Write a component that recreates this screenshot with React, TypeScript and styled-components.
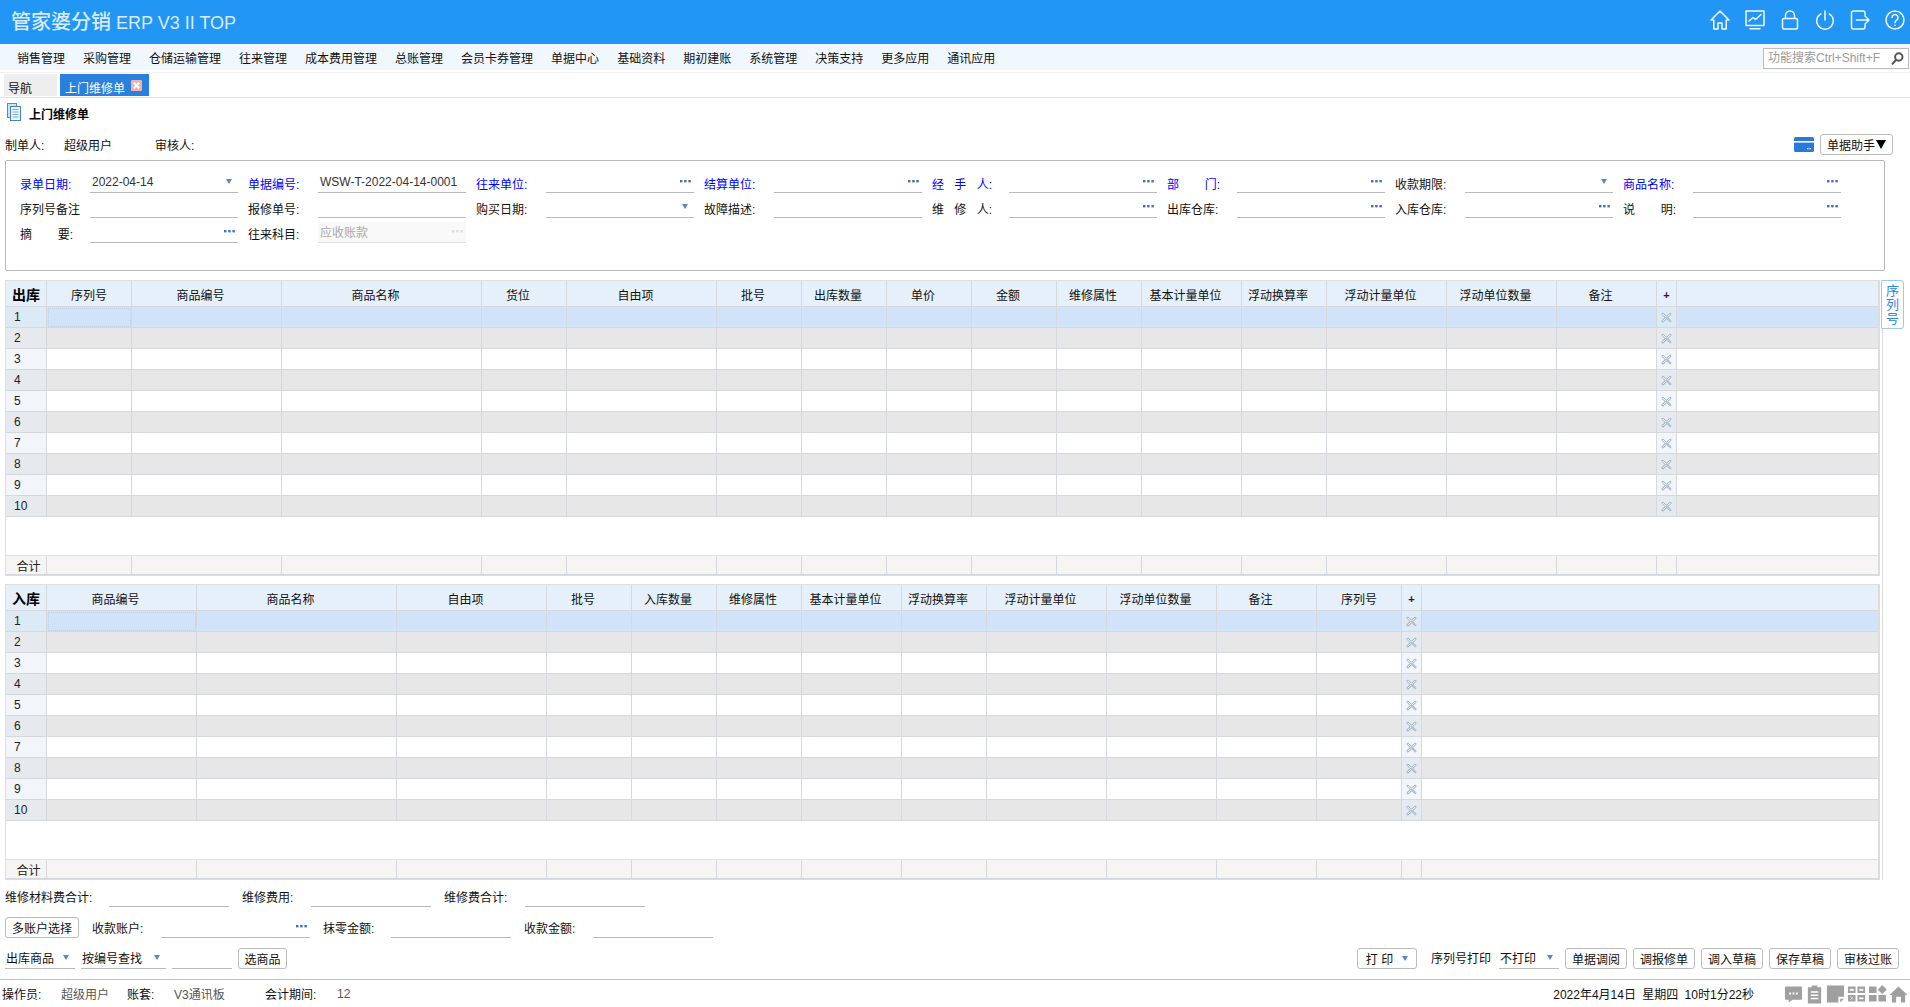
import React from "react";
import styled, { createGlobalStyle } from "styled-components";

const GlobalStyle = createGlobalStyle`
  html, body {
    margin: 0;
    padding: 0;
    background: #fff;
  }
  body {
    font-family: "Liberation Sans", "Noto Sans CJK SC", sans-serif;
    font-size: 12px;
    color: #111;
  }
`;

const Page = styled.div`
  width: 1910px;
  height: 1007px;
  overflow: hidden;
  display: flex;
  flex-direction: column;
`;

/* top bar */
const TopBar = styled.header`
  height: 44px;
  flex: none;
  background: #2196f5;
  display: flex;
  align-items: center;
  justify-content: space-between;
  padding: 0 5px 4px 11px;
  box-sizing: border-box;
`;

const Brand = styled.div`
  color: #dcebf9;
  font-size: 18px;
  white-space: nowrap;
  span {
    font-size: 20px;
    font-weight: 500;
  }
`;

const TopIcons = styled.div`
  display: flex;
  gap: 15px;
  align-items: center;
  svg {
    width: 20px;
    height: 20px;
    fill: none;
    stroke: #fff;
    stroke-width: 1.5;
    stroke-linejoin: round;
    stroke-linecap: round;
    opacity: 0.95;
  }
`;

const MenuBar = styled.nav`
  height: 26px;
  flex: none;
  background: #f1f7fe;
  display: flex;
  align-items: center;
  gap: 18px;
  padding: 0 1px 0 17px;
  box-sizing: border-box;
`;

const MenuItem = styled.span`
  color: #111;
  white-space: nowrap;
  padding-top: 1px;
`;

const SearchBox = styled.div`
  margin-left: auto;
  width: 146px;
  height: 21px;
  margin-top: 2px;
  box-sizing: border-box;
  border: 1px solid #bdbdbd;
  background: #fff;
  color: #9a9a9a;
  display: flex;
  align-items: center;
  justify-content: space-between;
  padding: 0 4px 3px 4px;
  white-space: nowrap;
  svg {
    width: 13px;
    height: 13px;
    flex: none;
    margin-top: 3px;
  }
`;

const TabStrip = styled.div`
  margin-top: 2px;
  height: 26px;
  flex: none;
  box-sizing: border-box;
  border-top: 1px solid #f1f1f1;
  border-bottom: 1px solid #dedede;
  display: flex;
  align-items: flex-end;
  gap: 3px;
  padding: 0 0 1px 4px;
`;

const NavTab = styled.div`
  width: 53px;
  height: 22px;
  box-sizing: border-box;
  background: #eeeeee;
  padding: 7px 0 0 4px;
  line-height: 16px;
`;

const ActiveTab = styled.div`
  width: 89px;
  height: 22px;
  box-sizing: border-box;
  background: #2a80de;
  color: #fff;
  padding: 7px 0 0 5px;
  line-height: 16px;
  display: flex;
  gap: 6px;
  svg {
    width: 11px;
    height: 11px;
    margin-top: -1px;
  }
`;

/* bill title */
const TitleRow = styled.div`
  height: 36px;
  flex: none;
  box-sizing: border-box;
  display: flex;
  align-items: flex-start;
  gap: 8px;
  padding: 5px 0 0 7px;
  svg {
    width: 14px;
    height: 18px;
  }
`;

const BillTitle = styled.h1`
  margin: 4px 0 0;
  font-size: 12px;
  line-height: 16px;
  font-weight: 700;
  color: #000;
`;

const MetaRow = styled.div`
  height: 21px;
  flex: none;
  margin-bottom: 5px;
  display: flex;
  align-items: center;
  padding: 0 17px 0 5px;
`;

const MetaLabel = styled.span<{ $w: number }>`
  width: ${p => p.$w}px;
  flex: none;
  white-space: nowrap;
`;

const CardIcon = styled.svg`
  margin-left: auto;
  width: 20px;
  height: 15px;
  margin-right: 6px;
`;

const Btn = styled.button<{ $w?: number }>`
  width: ${p => (p.$w ? `${p.$w}px` : "auto")};
  height: 21px;
  flex: none;
  padding: 0;
  box-sizing: border-box;
  border: 1px solid #bcbcbc;
  border-radius: 3px;
  background: #fff;
  color: #111;
  font: inherit;
  white-space: nowrap;
  display: flex;
  align-items: center;
  justify-content: center;
  gap: 6px;
`;

const BtnCaret = styled.i`
  flex: none;
  width: 0;
  height: 0;
  margin-left: -5px;
  border-left: 5px solid transparent;
  border-right: 5px solid transparent;
  border-top: 9px solid #000;
`;

/* head form */
const FormBox = styled.section`
  width: 1880px;
  height: 111px;
  flex: none;
  margin: 0 0 9px 5px;
  box-sizing: border-box;
  border: 1px solid #b9b9b9;
  border-radius: 2px;
  padding: 7px 0 0 14px;
  display: grid;
  grid-template-columns: 218px 218px 218px 218px 225px 218px 218px 218px;
  grid-auto-rows: 25px;
  column-gap: 10px;
`;

const Field = styled.div`
  display: flex;
  align-items: flex-end;
`;

const FieldLabel = styled.label<{ $wide?: boolean; $required?: boolean }>`
  width: ${p => (p.$wide ? 77 : 70)}px;
  flex: none;
  line-height: 16px;
  color: ${p => (p.$required ? "#0000ff" : "#111")};
  white-space: nowrap;
`;

const LabelInner = styled.span<{ $wide?: boolean }>`
  display: flex;
  width: ${p => (p.$wide ? 60 : 53)}px;
  justify-content: space-between;
`;

const FieldInput = styled.div<{ $disabled?: boolean }>`
  flex: 1;
  height: 21px;
  box-sizing: border-box;
  border-bottom: 1px solid ${p => (p.$disabled ? "#dedede" : "#b9b9b9")};
  background: ${p => (p.$disabled ? "#f9f9f9" : "transparent")};
  color: ${p => (p.$disabled ? "#aaa" : "#333")};
  display: flex;
  align-items: center;
  justify-content: space-between;
  padding: 0 3px 1px 2px;
  white-space: nowrap;
`;

const Arrow = styled.i`
  flex: none;
  width: 0;
  height: 0;
  border-left: 3.5px solid transparent;
  border-right: 3.5px solid transparent;
  border-top: 5px solid #5a86c4;
`;

const SelectArrow = styled(Arrow)`
  margin: 0 3px 0 auto;
`;

const PrintArrow = styled(Arrow)`
  margin-left: 3px;
`;

const Dots = styled.svg<{ $pale?: boolean }>`
  margin-left: auto;
  flex: none;
  width: 11px;
  height: 3px;
  fill: ${p => (p.$pale ? "#dcdcdc" : "#3f6fb8")};
`;

/* grids */
const GridArea = styled.div`
  display: flex;
  flex: none;
`;

const GridStack = styled.div`
  width: 1875px;
  margin-left: 5px;
  flex: none;
  display: flex;
  flex-direction: column;
  gap: 8px;
`;

const SidePane = styled.aside`
  margin-left: 2px;
  flex: none;
  width: 22px;
  border-left: 1px solid #dcdcdc;
`;

const SideTab = styled.div`
  width: 23px;
  height: 49px;
  margin-left: -2px;
  padding-right: 2px;
  box-sizing: border-box;
  background: #fff;
  border: 1px solid #9ccbe6;
  border-radius: 0 3px 3px 0;
  color: #2f86e0;
  font-size: 13px;
  line-height: 19px;
  letter-spacing: 1px;
  writing-mode: vertical-rl;
  display: flex;
  align-items: center;
  justify-content: center;
`;

const GridBox = styled.div`
  border-left: 1px solid #dcdfe2;
  border-right: 2px solid #dcdcdc;
  border-top: 1px solid #dcdfe2;
  border-bottom: 1px solid #dcdcdc;
  box-sizing: border-box;
  height: 296px;
  overflow: hidden;
`;

const Table = styled.table`
  width: 100%;
  table-layout: fixed;
  border-collapse: separate;
  border-spacing: 0;
  td,
  th {
    box-sizing: border-box;
    border-right: 1px solid #d5d9dd;
    border-bottom: 1px solid #d5d9dd;
    padding: 0;
    font-weight: 400;
  }
  td:last-child,
  th:last-child {
    border-right: 0;
  }
`;

const Col = styled.col<{ $w?: number }>`
  width: ${p => (p.$w ? `${p.$w}px` : "auto")};
`;

const HeadCell = styled.th<{ $shift?: boolean }>`
  height: 26px;
  background: #e5f0fb;
  color: #111;
  text-align: center;
  white-space: nowrap;
  && {
    padding: 2px ${p => (p.$shift ? 12 : 0)}px 0 0;
  }
`;

const CornerCell = styled(HeadCell)`
  && {
    font-size: 14px;
    font-weight: 700;
    padding: 0;
  }
  color: #000;
`;

const PlusMark = styled.span`
  color: #3a0c40;
  font-weight: 700;
  font-size: 11px;
`;

type RowTone = "selected" | "plain" | "grey";

const rowBg: Record<RowTone, string> = {
  selected: "#d0e3f8",
  plain: "#fff",
  grey: "#e7e7e7",
};
const sideBg: Record<RowTone, string> = {
  selected: "#dde9f5",
  plain: "#f2f6fa",
  grey: "#e6eaef",
};

const Cell = styled.td<{ $tone: RowTone; $focus?: boolean }>`
  height: 21px;
  background: ${p => rowBg[p.$tone]};
  ${p => (p.$focus ? "outline: 1px dotted #bccfe6; outline-offset: -2px;" : "")}
`;

const RowNo = styled.td<{ $tone: RowTone }>`
  height: 21px;
  background: ${p => sideBg[p.$tone]};
  padding-left: 8px !important;
  color: #222;
`;

const DelCell = styled.td<{ $tone: RowTone }>`
  height: 21px;
  background: ${p => sideBg[p.$tone]};
  text-align: center;
  line-height: 0;
  svg {
    width: 11px;
    height: 11px;
  }
`;

const BlankCell = styled.td`
  height: 39px;
  background: #fff;
  && {
    border-right: 0;
    border-bottom-color: #d6e4f0;
  }
`;

const FootCell = styled.td`
  height: 19px;
  background: #f6f5f3;
  text-align: center;
  color: #222;
`;

const FootTitle = styled(FootCell)`
  && {
    padding-left: 5px;
  }
`;

/* bottom form */
const BottomRow = styled.div<{ $h: number; $gap: number; $top?: number }>`
  height: ${p => p.$h}px;
  flex: none;
  margin-top: ${p => p.$top ?? 0}px;
  margin-bottom: ${p => p.$gap}px;
  padding: 0 11px 0 5px;
  display: flex;
  align-items: flex-end;
  gap: 13px;
`;

const InlineField = styled.div`
  display: flex;
  align-items: flex-end;
`;

const InlineLabel = styled.span<{ $w: number }>`
  width: ${p => p.$w}px;
  flex: none;
  padding-bottom: 2px;
  white-space: nowrap;
`;

const LineInput = styled.div<{ $w: number }>`
  width: ${p => p.$w}px;
  height: 20px;
  flex: none;
  box-sizing: border-box;
  border-bottom: 1px solid #b9b9b9;
  display: flex;
  align-items: center;
  padding: 0 3px 3px 2px;
`;

const SmallGroup = styled.div<{ $gap: number; $push?: boolean }>`
  display: flex;
  align-items: flex-end;
  gap: ${p => p.$gap}px;
  margin-left: ${p => (p.$push ? "auto" : "0")};
`;

const LineSelect = styled.div<{ $w: number }>`
  width: ${p => p.$w}px;
  height: 20px;
  flex: none;
  box-sizing: border-box;
  border-bottom: 1px solid #b9b9b9;
  display: flex;
  align-items: center;
  justify-content: space-between;
  padding: 0 6px 3px 1px;
  white-space: nowrap;
`;

const PlainText = styled.span<{ $ml?: number; $mr?: number }>`
  margin-left: ${p => p.$ml ?? 0}px;
  margin-right: ${p => p.$mr ?? 0}px;
  padding-bottom: 3px;
  white-space: nowrap;
`;

/* status bar */
const StatusBar = styled.footer`
  flex: none;
  height: 28px;
  box-sizing: border-box;
  border-top: 1px solid #bcc6c6;
  display: flex;
  align-items: center;
  padding: 0 2px 0 2px;
`;

const StatusCell = styled.span<{ $w: number; $muted?: boolean }>`
  width: ${p => p.$w}px;
  flex: none;
  color: ${p => (p.$muted ? "#555" : "#111")};
  white-space: nowrap;
`;

const ClockText = styled.span`
  margin-left: auto;
  white-space: nowrap;
  word-spacing: 3px;
`;

const StatusIcons = styled.div`
  margin-left: 30px;
  display: flex;
  gap: 2px;
  svg {
    width: 19px;
    height: 20px;
    fill: #a0a0a0;
  }
`;

const menus = [
  "销售管理", "采购管理", "仓储运输管理", "往来管理", "成本费用管理", "总账管理", "会员卡券管理",
  "单据中心", "基础资料", "期初建账", "系统管理", "决策支持", "更多应用", "通讯应用",
];

type FieldDef = {
  label: string;
  value?: string;
  required?: boolean;
  kind?: "select" | "dots";
  wide?: boolean;
  disabled?: boolean;
};

const fields: FieldDef[] = [
  { label: "录单日期:", required: true, value: "2022-04-14", kind: "select" },
  { label: "单据编号:", required: true, value: "WSW-T-2022-04-14-0001" },
  { label: "往来单位:", required: true, kind: "dots" },
  { label: "结算单位:", required: true, kind: "dots" },
  { label: "经 手 人:", required: true, kind: "dots", wide: true },
  { label: "部 门:", required: true, kind: "dots" },
  { label: "收款期限:", kind: "select" },
  { label: "商品名称:", required: true, kind: "dots" },
  { label: "序列号备注" },
  { label: "报修单号:" },
  { label: "购买日期:", kind: "select" },
  { label: "故障描述:" },
  { label: "维 修 人:", kind: "dots", wide: true },
  { label: "出库仓库:", kind: "dots" },
  { label: "入库仓库:", kind: "dots" },
  { label: "说 明:", kind: "dots" },
  { label: "摘 要:", kind: "dots" },
  { label: "往来科目:", value: "应收账款", kind: "dots", disabled: true },
];

type ColDef = { title: string; w: number };

const outColumns: ColDef[] = [
  { title: "序列号", w: 85 },
  { title: "商品编号", w: 150 },
  { title: "商品名称", w: 200 },
  { title: "货位", w: 85 },
  { title: "自由项", w: 150 },
  { title: "批号", w: 85 },
  { title: "出库数量", w: 85 },
  { title: "单价", w: 85 },
  { title: "金额", w: 85 },
  { title: "维修属性", w: 85 },
  { title: "基本计量单位", w: 100 },
  { title: "浮动换算率", w: 85 },
  { title: "浮动计量单位", w: 120 },
  { title: "浮动单位数量", w: 110 },
  { title: "备注", w: 100 },
];

const inColumns: ColDef[] = [
  { title: "商品编号", w: 150 },
  { title: "商品名称", w: 200 },
  { title: "自由项", w: 150 },
  { title: "批号", w: 85 },
  { title: "入库数量", w: 85 },
  { title: "维修属性", w: 85 },
  { title: "基本计量单位", w: 100 },
  { title: "浮动换算率", w: 85 },
  { title: "浮动计量单位", w: 120 },
  { title: "浮动单位数量", w: 110 },
  { title: "备注", w: 100 },
  { title: "序列号", w: 85 },
];

const DotsIcon = ({ pale }: { pale?: boolean }) => (
  <Dots viewBox="0 0 11 3" $pale={pale}>
    <rect x="0" y="0" width="2.4" height="2.4" />
    <rect x="4.2" y="0" width="2.4" height="2.4" />
    <rect x="8.4" y="0" width="2.4" height="2.4" />
  </Dots>
);

const DeleteIcon = () => (
  <svg viewBox="0 0 11 11" fill="none" strokeLinecap="round">
    <path d="M1.8 2 L5.5 5.5 M9.2 2 L1.8 9.2" stroke="#7f9cb5" strokeWidth="2.4" />
    <path d="M1.8 2 L5.5 5.5 M9.2 2 L1.8 9.2" stroke="#f1f5f8" strokeWidth="1.1" />
    <path d="M5.7 5.7 L9.3 9.2" stroke="#b4c4d2" strokeWidth="2.4" />
  </svg>
);

function BillGrid({ name, columns }: { name: string; columns: ColDef[] }) {
  const rows = Array.from({ length: 10 }, (_, i) => i);
  return (
    <GridBox>
      <Table>
        <colgroup>
          <Col $w={41} />
          {columns.map(c => (
            <Col key={c.title} $w={c.w} />
          ))}
          <Col $w={20} />
          <Col />
        </colgroup>
        <thead>
          <tr>
            <CornerCell>{name}</CornerCell>
            {columns.map(c => (
              <HeadCell key={c.title} $shift={c.title !== "序列号"}>{c.title}</HeadCell>
            ))}
            <HeadCell>
              <PlusMark>+</PlusMark>
            </HeadCell>
            <HeadCell />
          </tr>
        </thead>
        <tbody>
          {rows.map(i => {
            const tone: RowTone = i === 0 ? "selected" : i % 2 ? "grey" : "plain";
            return (
              <tr key={i}>
                <RowNo $tone={tone}>{i + 1}</RowNo>
                {columns.map((c, k) => (
                  <Cell key={c.title} $tone={tone} $focus={i === 0 && k === 0} />
                ))}
                <DelCell $tone={tone}>
                  <DeleteIcon />
                </DelCell>
                <Cell $tone={tone} />
              </tr>
            );
          })}
          <tr>
            <BlankCell colSpan={columns.length + 3} />
          </tr>
          <tr>
            <FootTitle>合计</FootTitle>
            {columns.map(c => (
              <FootCell key={c.title} />
            ))}
            <FootCell />
            <FootCell />
          </tr>
        </tbody>
      </Table>
    </GridBox>
  );
}

function HeadField({ def }: { def: FieldDef }) {
  return (
    <Field>
      <FieldLabel $wide={def.wide} $required={def.required}>
        <LabelInner $wide={def.wide}>
          {def.label.split(" ").map(part => (
            <span key={part}>{part}</span>
          ))}
        </LabelInner>
      </FieldLabel>
      <FieldInput $disabled={def.disabled}>
        {def.value && <span>{def.value}</span>}
        {def.kind === "select" && <SelectArrow />}
        {def.kind === "dots" && <DotsIcon pale={def.disabled} />}
      </FieldInput>
    </Field>
  );
}

export default function App() {
  return (
    <Page>
      <GlobalStyle />
      <TopBar>
        <Brand>
          <span>管家婆分销</span> ERP V3 II TOP
        </Brand>
        <TopIcons>
          <svg viewBox="0 0 20 20">
            <path d="M10 1 L1 10 L3.8 10 L3.8 19 L8 19 L8 13 L12 13 L12 19 L16.2 19 L16.2 10 L19 10 Z" />
          </svg>
          <svg viewBox="0 0 20 20">
            <rect x="1" y="1" width="18" height="14.5" />
            <path d="M4 11 L8 7.5 L10.5 9.5 L16 4.5" />
            <path d="M5 18.7 H15" />
          </svg>
          <svg viewBox="0 0 20 20">
            <rect x="2.5" y="8.5" width="15" height="10.5" rx="1.5" />
            <path d="M5.5 8.5 V5.5 a4.5 4.5 0 0 1 9 0 V8.5" />
          </svg>
          <svg viewBox="0 0 20 20">
            <path d="M5.8 3.8 A8.3 8.3 0 1 0 14.2 3.8" />
            <path d="M10 1 V10" />
          </svg>
          <svg viewBox="0 0 20 20">
            <path d="M15 5 V3 a2 2 0 0 0 -2 -2 H3.5 a2 2 0 0 0 -2 2 V17 a2 2 0 0 0 2 2 H13 a2 2 0 0 0 2 -2 V15" />
            <path d="M6.5 10 H19 M15 6 L19 10 L15 14" />
          </svg>
          <svg viewBox="0 0 20 20">
            <circle cx="10" cy="10" r="9" />
            <path d="M7 7.5 a3 3 0 1 1 4.6 2.6 c-1 .6 -1.6 1.2 -1.6 2.6" />
            <path d="M10 15.2 V15.4" />
          </svg>
        </TopIcons>
      </TopBar>

      <MenuBar>
        {menus.map(m => (
          <MenuItem key={m}>{m}</MenuItem>
        ))}
        <SearchBox>
          <span>功能搜索Ctrl+Shift+F</span>
          <svg viewBox="0 0 13 13" fill="none" stroke="#555" strokeWidth="2">
            <circle cx="7.8" cy="5" r="3.7" />
            <path d="M5 8 L1.5 11.8" strokeLinecap="round" />
          </svg>
        </SearchBox>
      </MenuBar>

      <TabStrip>
        <NavTab>导航</NavTab>
        <ActiveTab>
          上门维修单
          <svg viewBox="0 0 11 11">
            <rect width="11" height="11" rx="1" fill="#f3b0ac" />
            <path d="M2.8 2.8 L8.2 8.2 M8.2 2.8 L2.8 8.2" stroke="#fff" strokeWidth="2" />
          </svg>
        </ActiveTab>
      </TabStrip>

      <TitleRow>
        <svg viewBox="0 0 14 18">
          <rect x="0.5" y="0.5" width="9" height="14" fill="#cfe2f3" stroke="#4f8fc8" />
          <rect x="3.5" y="3.5" width="10" height="14" fill="#eef5fb" stroke="#3f84c0" />
          <path d="M5.5 6.5 H11.5 M5.5 9 H11.5 M5.5 11.5 H11.5 M5.5 14 H11.5" stroke="#7fa9d0" />
        </svg>
        <BillTitle>上门维修单</BillTitle>
      </TitleRow>

      <MetaRow>
        <MetaLabel $w={59}>制单人:</MetaLabel>
        <MetaLabel $w={91}>超级用户</MetaLabel>
        <MetaLabel $w={60}>审核人:</MetaLabel>
        <CardIcon viewBox="0 0 20 15">
          <rect width="20" height="15" rx="1.5" fill="#2a78d8" />
          <rect y="4" width="20" height="1.6" fill="#fff" />
          <rect x="13" y="11" width="1.5" height="1.3" fill="#fff" />
          <rect x="15.5" y="11" width="1.5" height="1.3" fill="#fff" />
        </CardIcon>
        <Btn $w={73}>
          单据助手
          <BtnCaret />
        </Btn>
      </MetaRow>

      <FormBox>
        {fields.map(f => (
          <HeadField key={f.label} def={f} />
        ))}
      </FormBox>

      <GridArea>
        <GridStack>
          <BillGrid name="出库" columns={outColumns} />
          <BillGrid name="入库" columns={inColumns} />
        </GridStack>
        <SidePane>
          <SideTab>序列号</SideTab>
        </SidePane>
      </GridArea>

      <BottomRow $h={25} $gap={10} $top={2}>
        <InlineField>
          <InlineLabel $w={104}>维修材料费合计:</InlineLabel>
          <LineInput $w={120} />
        </InlineField>
        <InlineField>
          <InlineLabel $w={69}>维修费用:</InlineLabel>
          <LineInput $w={120} />
        </InlineField>
        <InlineField>
          <InlineLabel $w={81}>维修费合计:</InlineLabel>
          <LineInput $w={120} />
        </InlineField>
      </BottomRow>

      <BottomRow $h={21} $gap={10}>
        <Btn $w={74}>多账户选择</Btn>
        <InlineField>
          <InlineLabel $w={69}>收款账户:</InlineLabel>
          <LineInput $w={149}>
            <DotsIcon />
          </LineInput>
        </InlineField>
        <InlineField>
          <InlineLabel $w={68}>抹零金额:</InlineLabel>
          <LineInput $w={120} />
        </InlineField>
        <InlineField>
          <InlineLabel $w={69}>收款金额:</InlineLabel>
          <LineInput $w={120} />
        </InlineField>
      </BottomRow>

      <BottomRow $h={21} $gap={10}>
        <SmallGroup $gap={6}>
          <LineSelect $w={70}>
            出库商品
            <Arrow />
          </LineSelect>
          <LineSelect $w={85}>
            按编号查找
            <Arrow />
          </LineSelect>
          <LineInput $w={60} />
          <Btn $w={49}>选商品</Btn>
        </SmallGroup>
        <SmallGroup $gap={6} $push>
          <Btn $w={60}>
            打 印
            <PrintArrow />
          </Btn>
          <PlainText $ml={8} $mr={2}>序列号打印</PlainText>
          <LineSelect $w={60}>
            不打印
            <Arrow />
          </LineSelect>
          <Btn $w={62}>单据调阅</Btn>
          <Btn $w={62}>调报修单</Btn>
          <Btn $w={62}>调入草稿</Btn>
          <Btn $w={62}>保存草稿</Btn>
          <Btn $w={62}>审核过账</Btn>
        </SmallGroup>
      </BottomRow>

      <StatusBar>
        <StatusCell $w={59}>操作员:</StatusCell>
        <StatusCell $w={66} $muted>超级用户</StatusCell>
        <StatusCell $w={47}>账套:</StatusCell>
        <StatusCell $w={91} $muted>V3通讯板</StatusCell>
        <StatusCell $w={72}>会计期间:</StatusCell>
        <StatusCell $w={20} $muted>12</StatusCell>
        <ClockText>2022年4月14日 星期四 10时1分22秒</ClockText>
        <StatusIcons>
          <svg viewBox="0 0 20 20">
            <path d="M2 2 H18 a1 1 0 0 1 1 1 V15 a1 1 0 0 1 -1 1 H9 L5 19 V16 H2 a1 1 0 0 1 -1 -1 V3 a1 1 0 0 1 1 -1 Z" />
            <path d="M5.5 8.5 h2 v2 h-2 Z M9 8.5 h2 v2 h-2 Z M12.5 8.5 h2 v2 h-2 Z" fill="#fff" />
          </svg>
          <svg viewBox="0 0 20 20">
            <path d="M7 1 h6 v2 h4 v17 h-14 v-17 h4 Z" />
            <path d="M6 7 h8 v1.6 h-8 Z M6 10.5 h8 v1.6 h-8 Z M6 14 h8 v1.6 h-8 Z" fill="#fff" />
          </svg>
          <svg viewBox="0 0 20 20">
            <path d="M1 1 H19 V13 H13 V19 H1 Z" />
            <path d="M15 15 H19 L15 19 Z" />
          </svg>
          <svg viewBox="0 0 20 20">
            <path d="M1 2 h8 v7 h-8 Z M11 2 h8 v7 h-8 Z M1 11 h8 v7 h-8 Z M11 11 h8 v7 h-8 Z" />
            <path d="M3 5 h4 v1.2 h-4 Z M13 5 h4 v1.2 h-4 Z M3.5 13 l3 3 M6.5 13 l-3 3 M13 14 h4 v1.2 h-4 Z" fill="#fff" stroke="#fff" strokeWidth="0.6" />
          </svg>
          <svg viewBox="0 0 20 20">
            <path d="M1 2 h8 v7 h-8 Z M1 11 h8 v7 h-8 Z M11 11 h8 v7 h-8 Z M15 0.5 L19.8 5.5 L15 10 L10.2 5.5 Z" />
          </svg>
          <svg viewBox="0 0 20 20">
            <path d="M10 2 L19.5 11 H17 V19 H12.5 V13 H7.5 V19 H3 V11 H0.5 Z" />
          </svg>
        </StatusIcons>
      </StatusBar>
    </Page>
  );
}
